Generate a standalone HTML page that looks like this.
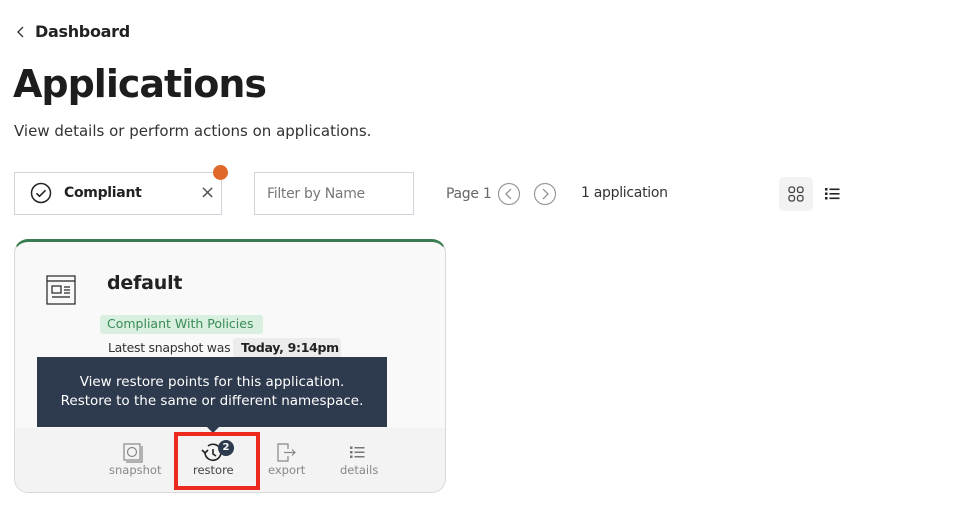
<!DOCTYPE html>
<html><head><style>
*{box-sizing:border-box;margin:0;padding:0}
body{width:957px;height:510px;background:#fff;font-family:"DejaVu Sans","Liberation Sans",sans-serif;color:#222;position:relative;overflow:hidden}
.a{position:absolute}
</style></head><body>
<svg class="a" style="left:16px;top:26px" width="10" height="12"><path d="M7 1L2 6l5 5" fill="none" stroke="#333" stroke-width="1.3"/></svg>
<div class="a" style="left:35px;top:22px;font-size:16px;font-weight:bold;letter-spacing:-0.3px">Dashboard</div>
<div class="a" style="left:13px;top:62px;font-size:38px;font-weight:bold;letter-spacing:-1px;color:#1d1d1d">Applications</div>
<div class="a" style="left:14px;top:122px;font-size:15px;color:#333">View details or perform actions on applications.</div>

<div class="a" style="left:14px;top:172px;width:208px;height:43px;border:1px solid #cfd3da;background:#fff"></div>
<svg class="a" style="left:30px;top:182px" width="22" height="22" viewBox="0 0 22 22"><circle cx="11" cy="11" r="9.5" fill="none" stroke="#222" stroke-width="1.5"/><path d="M6.5 11.3l3 3 6-6" fill="none" stroke="#222" stroke-width="1.6"/></svg>
<div class="a" style="left:64px;top:185px;font-size:14px;font-weight:bold;letter-spacing:-0.3px">Compliant</div>
<div class="a" style="left:200px;top:182px;font-size:18px;color:#555">×</div>
<div class="a" style="left:213px;top:165px;width:15px;height:15px;border-radius:50%;background:#e0692a"></div>

<div class="a" style="left:254px;top:172px;width:160px;height:43px;border:1px solid #cfd3da"></div>
<div class="a" style="left:267px;top:186px;font-size:14px;color:#777;letter-spacing:-0.3px">Filter by Name</div>

<div class="a" style="left:446px;top:186px;font-size:14px;color:#666;letter-spacing:-0.3px">Page 1</div>
<svg class="a" style="left:497px;top:182px" width="60" height="24"><circle cx="12" cy="12" r="10.5" fill="none" stroke="#999" stroke-width="1.2"/><path d="M14 7l-5 5 5 5" fill="none" stroke="#888" stroke-width="1.2"/><circle cx="48" cy="12" r="10.5" fill="none" stroke="#999" stroke-width="1.2"/><path d="M46 7l5 5-5 5" fill="none" stroke="#888" stroke-width="1.2"/></svg>
<div class="a" style="left:581px;top:185px;font-size:14px;color:#333;letter-spacing:-0.3px">1 application</div>
<div class="a" style="left:779px;top:177px;width:34px;height:34px;border-radius:5px;background:#f2f2f2"></div>
<svg class="a" style="left:788px;top:186px" width="16" height="16"><g fill="none" stroke="#444" stroke-width="1.3"><rect x="1" y="1" width="5.5" height="5.5" rx="2"/><rect x="9.5" y="1" width="5.5" height="5.5" rx="2"/><rect x="1" y="9.5" width="5.5" height="5.5" rx="2"/><rect x="9.5" y="9.5" width="5.5" height="5.5" rx="2"/></g></svg>
<svg class="a" style="left:825px;top:187px" width="16" height="14"><g fill="#222"><rect x="0" y="1" width="2.5" height="2.5"/><rect x="0" y="5.5" width="2.5" height="2.5"/><rect x="0" y="10" width="2.5" height="2.5"/><rect x="4.5" y="1.5" width="10" height="1.6"/><rect x="4.5" y="6" width="10" height="1.6"/><rect x="4.5" y="10.5" width="10" height="1.6"/></g></svg>

<div class="a" style="left:14px;top:239px;width:432px;height:254px;border-radius:14px;border:1px solid #d8d8d8;border-top:3px solid #3a7d50;background:#f9f9f9;overflow:hidden">
 <div class="a" style="left:0;bottom:0;width:100%;height:64px;background:#f3f3f3"></div>
</div>
<svg class="a" style="left:46px;top:275px" width="30" height="30"><g fill="none" stroke="#222" stroke-width="1.2"><rect x="1" y="1" width="28" height="28"/><line x1="1" y1="6" x2="29" y2="6"/><rect x="6" y="11" width="9" height="7"/><line x1="18" y1="12" x2="24" y2="12"/><line x1="18" y1="15" x2="24" y2="15"/><line x1="18" y1="18" x2="24" y2="18"/><line x1="6" y1="22" x2="24" y2="22"/></g></svg>
<div class="a" style="left:107px;top:272px;font-size:19px;font-weight:bold;letter-spacing:-0.2px">default</div>
<div class="a" style="left:100px;top:315px;width:163px;height:19px;border-radius:3px;background:#d9efe0;color:#3a8a55;font-size:12.5px;padding:1px 7px;white-space:nowrap">Compliant With Policies</div>
<div class="a" style="left:108px;top:340px;font-size:12.5px;color:#333;letter-spacing:-0.3px">Latest snapshot was</div>
<div class="a" style="left:233px;top:338px;width:108px;height:20px;border-radius:3px;background:#ececec;font-size:12.5px;font-weight:bold;padding:2px 8px;letter-spacing:-0.3px;white-space:nowrap">Today, 9:14pm</div>

<div class="a" style="left:37px;top:357px;width:350px;height:70px;background:#2e3a4d;color:#fff;font-size:13.5px;text-align:center;line-height:19px;padding-top:16px;white-space:nowrap">View restore points for this application.<br>Restore to the same or different namespace.</div>
<div class="a" style="left:206px;top:426px;width:0;height:0;border-left:7px solid transparent;border-right:7px solid transparent;border-top:7px solid #2e3a4d"></div>

<svg class="a" style="left:123px;top:443px" width="20" height="20"><g fill="none" stroke="#888" stroke-width="1.2"><rect x="1" y="1" width="16" height="16"/><circle cx="9" cy="9" r="4.5"/><path d="M3 19h16V3"/></g></svg>
<div class="a" style="left:109px;top:463px;font-size:11.5px;color:#888">snapshot</div>
<div class="a" style="left:174px;top:432px;width:86px;height:58px;border:4px solid #ee2a1f"></div>
<svg class="a" style="left:200px;top:441px" width="26" height="22"><g fill="none" stroke="#222" stroke-width="1.6"><path d="M5 12a8 8 0 1 0 3-7"/><path d="M2 9l3 3 3-3"/><path d="M13 8v5l3 2"/></g></svg>
<div class="a" style="left:218px;top:440px;width:16px;height:16px;border-radius:50%;background:#2e3a4d;color:#fff;font-size:10px;font-weight:bold;text-align:center;line-height:16px">2</div>
<div class="a" style="left:193px;top:463px;font-size:11.5px;color:#444">restore</div>
<svg class="a" style="left:277px;top:443px" width="20" height="20"><g fill="none" stroke="#888" stroke-width="1.2"><path d="M11 6V1H1v17l5 0h5v-5"/><path d="M7 9.5h11M15 6.5l3 3-3 3"/></g></svg>
<div class="a" style="left:268px;top:463px;font-size:11.5px;color:#888">export</div>
<svg class="a" style="left:350px;top:446px" width="16" height="14"><g fill="#777"><rect x="0" y="0.5" width="2.5" height="2.5"/><rect x="0" y="5" width="2.5" height="2.5"/><rect x="0" y="9.5" width="2.5" height="2.5"/><rect x="4.5" y="1" width="10" height="1.5"/><rect x="4.5" y="5.5" width="10" height="1.5"/><rect x="4.5" y="10" width="10" height="1.5"/></g></svg>
<div class="a" style="left:340px;top:463px;font-size:11.5px;color:#888">details</div>
</body></html>
